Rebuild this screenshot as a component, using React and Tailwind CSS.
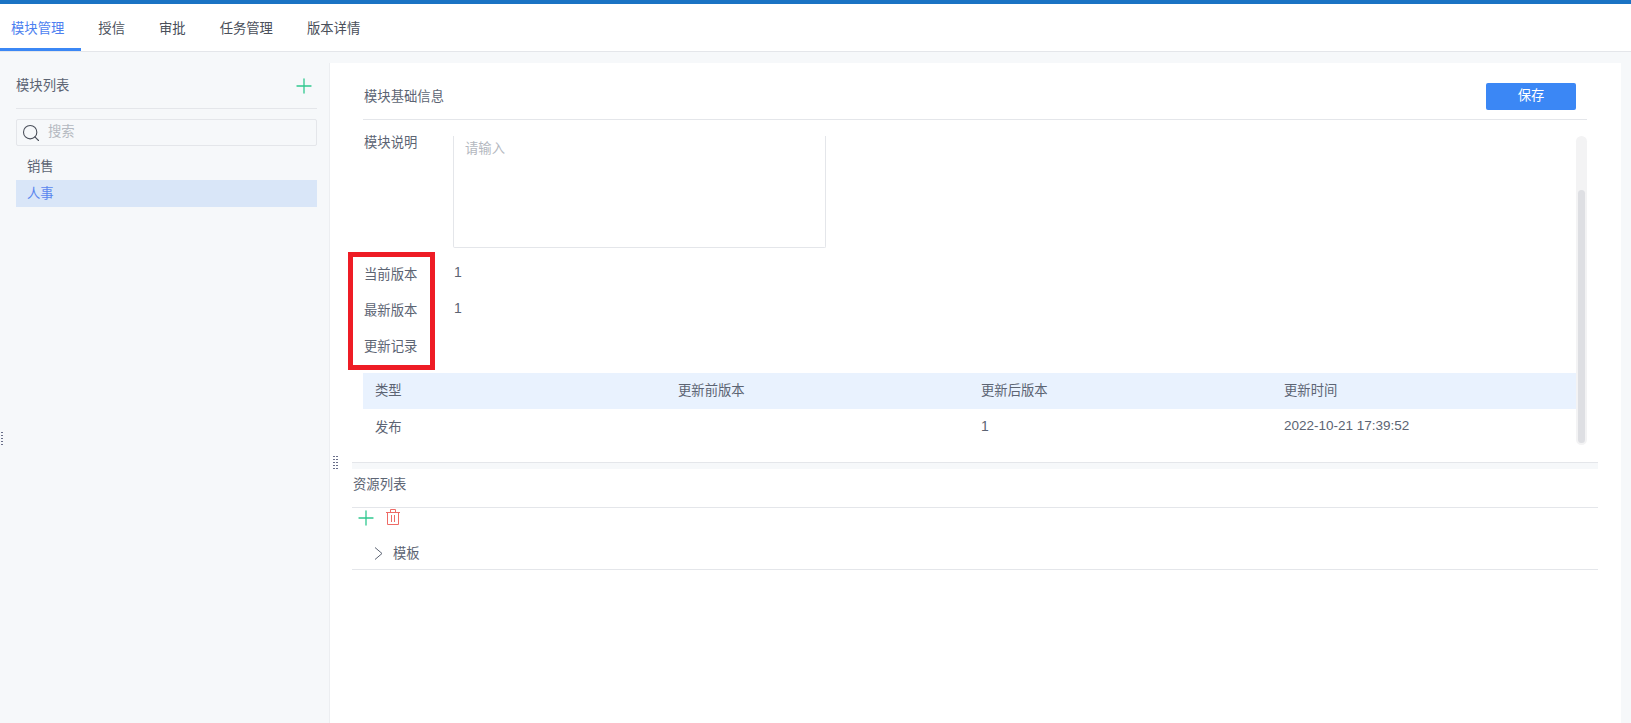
import { Search, Plus } from 'lucide-react'

const tabs = ['模块管理', '授信', '审批', '任务管理', '版本详情']

function Grip({ className }) {
    return (
        <div className={`grid grid-cols-2 gap-x-[1px] gap-y-[2px] ${className}`}>
            {[0, 1, 2, 3, 4, 5, 6, 7, 8, 9].map(i => (
                <span key={i} className="w-[2px] h-[1px] bg-[#6a6f8a]"></span>
            ))}
        </div>
    )
}

function TrashIcon() {
    return (
        <svg width="14" height="16" viewBox="0 0 14 16" fill="none" stroke="#ee6b66" strokeWidth="1">
            <path d="M0 3.5h14M4.5 3V.5h5V3M1.5 3.5v12h11v-12M5.5 6v7M8.5 6v7" />
        </svg>
    )
}

function ChevronIcon() {
    return (
        <svg width="9" height="13" viewBox="0 0 9 13" fill="none" stroke="#5c6473" strokeWidth="1">
            <path d="M1 .5l7 6-7 6" />
        </svg>
    )
}

export default function App() {
    return (
        <div className="relative w-[1631px] h-[723px] overflow-hidden flex flex-col bg-[#f6f8fa] text-[13.33px] text-[#5c6473] font-['Liberation_Sans','Noto_Sans_CJK_SC',sans-serif]">

            <div className="h-[4px] bg-[#1a73c4] shrink-0"></div>

            {/* TABS */}
            <div className="h-[48px] shrink-0 bg-white border-b border-[#e4e6ea] flex text-[#4a4f5a]">
                {tabs.map((tab, i) => (
                    <div
                        key={tab}
                        className={`h-[47px] flex items-center border-b-[3px] pt-[5px] px-[17px] ${i === 0 ? 'border-[#3b87f5] text-[#4d7ff0] pl-[11px]' : 'border-transparent'}`}
                    >
                        {tab}
                    </div>
                ))}
            </div>

            <div className="flex-1 flex min-h-0">

                {/* SIDEBAR */}
                <aside className="relative w-[329px] shrink-0 pl-[16px] pr-[12px] pt-[11px]">
                    <div className="h-[46px] flex items-center justify-between border-b border-[#e4e6ea] pr-[1px]">
                        <span>模块列表</span>
                        <Plus size={24} strokeWidth={1.3} color="#2fc88f" />
                    </div>
                    <div className="mt-[10px] h-[27px] flex items-center gap-[7px] px-[4px] border border-[#e4e6ea] rounded-[2px] text-[#b4b8c0]">
                        <Search size={20} strokeWidth={1.3} color="#4a4f5a" />
                        <span className="pb-[1px]">搜索</span>
                    </div>
                    <div className="mt-[7px] h-[27px] flex items-center px-[11px]">销售</div>
                    <div className="h-[27px] flex items-center px-[11px] bg-[#d9e6f8] text-[#5b86ee]">人事</div>
                    <Grip className="absolute left-[-2px] top-[380px]" />
                </aside>

                {/* PANEL */}
                <main className="relative flex-1 mt-[11px] mr-[10px] bg-white border-l border-[#eceef1] min-w-0">

                    <Grip className="absolute left-[3px] top-[393px]" />

                    <div className="ml-[33px] mr-[34px] h-[57px] flex items-center justify-between border-b border-[#e4e6ea] pt-[10px]">
                        <span className="pl-[1px] pt-[2px]">模块基础信息</span>
                        <button className="w-[90px] h-[27px] mr-[11px] bg-[#3b87f5] rounded-[2px] text-white">保存</button>
                    </div>

                    <div className="relative ml-[33px] mr-[34px] mt-[16px] h-[309px]">
                        {/* SCROLLBAR */}
                        <div className="absolute right-0 top-0 w-[11px] h-full bg-[#f3f3f4] rounded-full">
                            <div className="absolute left-[2px] right-[2px] top-[54px] bottom-[2px] bg-[#dedfe3] rounded-full"></div>
                        </div>

                        <div className="mr-[11px]">
                            <div className="flex">
                                <span className="w-[90px] pl-[1px] pt-[1px] leading-[12px]">模块说明</span>
                                <div className="w-[373px] h-[112px] px-[11px] pt-[3px] border border-t-0 border-[#e4e6ea] rounded-b-[2px] text-[#b4b8c0]">请输入</div>
                            </div>
                            <div className="flex h-[36px] mt-[8px] items-center">
                                <span className="w-[91px] pl-[1px] pt-[2px]">当前版本</span>
                                <span className="pb-[4px] text-[14px]">1</span>
                            </div>
                            <div className="flex h-[36px] items-center">
                                <span className="w-[91px] pl-[1px] pt-[2px]">最新版本</span>
                                <span className="pb-[4px] text-[14px]">1</span>
                            </div>
                            <div className="flex h-[36px] items-center">
                                <span className="w-[91px] pl-[1px] pt-[2px]">更新记录</span>
                            </div>

                            <div className="grid grid-cols-[303px_303px_303px_1fr] h-[36px] mt-[9px] items-center pl-[12px] bg-[#e9f2fe]">
                                <span>类型</span>
                                <span>更新前版本</span>
                                <span>更新后版本</span>
                                <span>更新时间</span>
                            </div>
                            <div className="grid grid-cols-[303px_303px_303px_1fr] h-[35px] items-center pl-[12px] text-[13.5px]">
                                <span className="pt-[2px] text-[13.33px]">发布</span>
                                <span></span>
                                <span className="text-[14px]">1</span>
                                <span>2022-10-21 17:39:52</span>
                            </div>
                        </div>
                    </div>

                    {/* RESOURCE LIST */}
                    <div className="ml-[22px] mr-[23px] mt-[17px] h-[7px] bg-[#f6f8fa] border-t border-[#e4e6ea]"></div>
                    <div className="ml-[22px] mr-[23px]">
                        <div className="h-[39px] flex items-center pl-[1px] pb-[6px] border-b border-[#e4e6ea]">资源列表</div>
                        <div className="h-[62px] flow-root border-b border-[#e4e6ea]">
                            <div className="flex items-start gap-[8px] pl-[2px] h-[21px] -mt-[2px]">
                                <Plus size={24} strokeWidth={1.3} color="#2fc88f" />
                                <span className="pt-[3px]"><TrashIcon /></span>
                            </div>
                            <div className="flex items-center gap-[10px] pl-[22px] h-[24px] mt-[14px]">
                                <ChevronIcon />
                                <span className="pt-[2px]">模板</span>
                            </div>
                        </div>
                    </div>
                </main>
            </div>

            {/* ANNOTATION */}
            <div className="absolute left-[348px] top-[252px] w-[87px] h-[118px] border-[5px] border-[#ee1c25]"></div>
        </div>
    )
}
